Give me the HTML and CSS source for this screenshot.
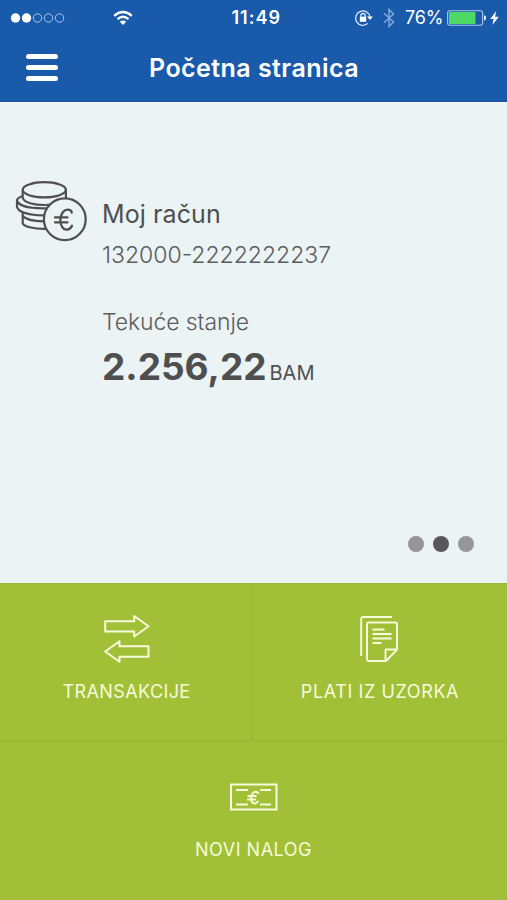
FILE: index.html
```html
<!DOCTYPE html>
<html lang="bs">
<head>
<meta charset="utf-8">
<title>Početna stranica</title>
<link rel="stylesheet" href="styles.css">
</head>
<body>
<div class="app">
  <header class="header">
    <div class="status">
      <div class="status-left">
        <svg class="signal" width="56" height="12" viewBox="0 0 56 12">
          <g fill="#fff"><circle cx="5.500" cy="6" r="4.700"/><circle cx="16.500" cy="6" r="4.700"/></g>
          <g fill="none" stroke="#a9c9ee" stroke-width="1"><circle cx="27.500" cy="6" r="4.200"/><circle cx="38.500" cy="6" r="4.200"/><circle cx="49.500" cy="6" r="4.200"/></g>
        </svg>
        <svg class="wifi" width="20" height="16" viewBox="0 0 20 16" fill="none" stroke="#fff" stroke-width="2.400">
          <path d="M1.200 5.800Q10-1.800 18.800 5.800M4.500 9.200Q10 4.400 15.500 9.200"/>
          <path d="M10 15 6.800 11.800Q10 9.200 13.200 11.800Z" fill="#fff" stroke="none"/>
        </svg>
      </div>
      <span class="time">11:49</span>
      <div class="status-right">
        <svg class="lock" width="20" height="18" viewBox="0 0 20 18" fill="none" stroke="#dceafa" stroke-width="1.300">
          <path d="M13.800 14.400A7.200 7.200 0 1 1 16 8.300"/>
          <path d="M13 7.500h6L16 11Z" fill="#fff" stroke="none"/>
          <path d="M6.900 8V6.600a2.100 2.100 0 0 1 4.200 0V8"/>
          <path d="M5.800 7.700h6.400v5.100H5.800Z" fill="#fff" stroke="none"/>
        </svg>
        <svg class="bluetooth" width="12" height="20" viewBox="0 0 12 20" fill="none" stroke="#7fa9dc" stroke-width="1.500">
          <path d="M1 5.200 10.500 14 6 18.500v-17L10.500 6 1 14.800"/>
        </svg>
        <span class="percent">76%</span>
        <svg class="battery" width="40" height="16" viewBox="0 0 40 16">
          <rect x=".6" y=".7" width="35" height="14.600" rx="2.200" fill="none" stroke="#a9c9ee" stroke-width="1.100"/>
          <rect x="2" y="2" width="26.500" height="12" rx="1" fill="#4cd964"/>
          <path d="M37 5.300q2.200.3 2.200 2.700T37 10.700Z" fill="#dceafa"/>
        </svg>
        <svg class="bolt" width="9" height="14" viewBox="0 0 9 14"><path d="M6.200 0 .2 8h3.400L2.400 14l6.400-8.200H5.100Z" fill="#fff"/></svg>
      </div>
    </div>
    <div class="nav">
      <div class="menu"><i></i><i></i><i></i></div>
      <h1 class="title">Početna stranica</h1>
    </div>
  </header>

  <main class="account">
    <svg class="coins" width="74" height="64" viewBox="0 0 74 64" fill="none" stroke="#4f4f4f" stroke-width="2.200">
      <ellipse cx="30.300" cy="9.800" rx="21.600" ry="7.600"/>
      <path d="M8.700 9.800V18c1.500 4.500 11 7 22 7q5 0 9-1M51.900 9.800V18.500"/>
      <path d="M8.700 16C5 17.300 3 18.700 3 20.500c1 4.500 10 7.700 26 7.900h4M3 20.500V27c1.500 5 12 8.200 27 8.400"/>
      <path d="M8.700 32v4c3 3.500 11 5.200 21 5.400M8.700 36v7.500c2 3.500 12 5.500 23 5.300"/>
      <circle cx="50.800" cy="39.200" r="20.900" fill="#ebf3f4"/>
      <path d="M57.800 32.500c-.8-3.600-6.300-3.800-9-.3-3.300 4.500-3.300 11.500-.3 15.300 2.700 3.500 7.700 2.600 9.500-1.700M41 37.400h12.500M41 42.400h12.500" stroke-width="2.300" stroke-linecap="round"/>
    </svg>
    <div class="details">
      <div class="name">Moj račun</div>
      <div class="number">132000-2222222237</div>
      <div class="label">Tekuće stanje</div>
      <div class="balance"><span class="amount">2.256,22</span><span class="currency">BAM</span></div>
    </div>
    <div class="pager"><i></i><i class="active"></i><i></i></div>
  </main>

  <section class="actions">
    <div class="tile transactions">
      <svg width="46" height="50" viewBox="0 0 46 50" fill="none" stroke="#f6fbdc" stroke-width="2" stroke-linejoin="round">
        <path d="M1.200 6.200h29V1L44.500 11.200 30.200 21.500v-5H1.200Z"/>
        <path d="M44.500 31.200H15.500V26.200L1.200 36.500 15.500 46.800v-5h29Z"/>
      </svg>
      <span class="caption">TRANSAKCIJE</span>
    </div>
    <div class="tile templates">
      <svg width="40" height="50" viewBox="0 0 40 50" fill="none" stroke="#f6fbdc" stroke-width="1.900" stroke-linejoin="round">
        <path d="M1.200 41V4q0-2 2-2H32"/>
        <path d="M8.500 7.500h27q1.500 0 1.500 1.500v25.500L26 46H8.500q-1.500 0-1.500-1.500V9Q7 7.500 8.500 7.500Z"/>
        <path d="M25.500 46V34.500h11.500M12.500 14.500h12M12.500 19h19M12.500 23.500h19M12.500 28h9"/>
      </svg>
      <span class="caption">PLATI IZ UZORKA</span>
    </div>
    <div class="tile order">
      <svg width="48" height="28" viewBox="0 0 48 28" fill="none" stroke="#f6fbdc" stroke-width="2">
        <path d="M1 1.500h45.500v25H1Z"/>
        <path d="M6 7h12M30 7h11M6 21.500h12M30 21.500h11"/>
        <path d="M28.500 11c-1-3.200-4.800-3-6.300.2-1.500 3.300-1.200 6.800.3 8.300 1.800 1.800 4.800.8 5.600-1.800M17.500 13h9M17 16.500h9"/>
      </svg>
      <span class="caption">NOVI NALOG</span>
    </div>
  </section>
</div>
</body>
</html>
```
FILE: styles.css
```css
* { box-sizing: border-box; }
body { margin: 0; font-family: Inter, "Liberation Sans", sans-serif; }
svg { display: block; flex: none; }
.app { display: flex; flex-direction: column; width: 507px; height: 900px; overflow: hidden; }

.header { height: 102px; background: #1a5aab; color: #fff; border-bottom: 1px solid #1750a0; }
.status { display: grid; grid-template-columns: 1fr 50px 1fr; align-items: center; height: 34px; }
.status-left, .status-right { display: flex; align-items: center; }
.status-left { padding-left: 10px; }
.wifi { margin-left: 47px; }
.time { padding: 1px 0 0 3px; font-size: 18px; font-weight: 600; letter-spacing: 1px; line-height: 34px; white-space: nowrap; }
.status-right { justify-content: flex-end; padding-right: 8px; }
.lock { margin-right: 1px; }
.bluetooth { margin: 0 10px 0 8px; }
.percent { width: 37px; padding-top: 1px; font-size: 18px; letter-spacing: -.2px; line-height: 34px; white-space: nowrap; }
.battery { margin: 0 3px 0 5px; }
.nav { display: flex; align-items: center; height: 67px; padding-left: 26px; }
.menu { display: flex; flex-direction: column; gap: 6px; width: 32px; }
.menu i { height: 5px; border-radius: 3px; background: #fff; }
.title { margin: 0 0 0 91px; font-size: 25px; line-height: 34px; font-weight: 600; letter-spacing: .45px; white-space: nowrap; }

.account { display: grid; grid-template-columns: 88px 1fr; grid-template-rows: 431px 49px; height: 481px; background: #ebf3f4; border-top: 1px solid #f6fbfc; }
.coins { margin: 77px 0 0 14px; }
.details { padding: 91px 0 0 14px; color: #4f4f4f; white-space: nowrap; }
.name { font-size: 25px; line-height: 40px; letter-spacing: .1px; }
.number { margin-top: 1px; font-size: 23px; line-height: 40px; font-weight: 300; color: #5c5c5c; }
.label { margin-top: 27px; font-size: 23px; line-height: 40px; font-weight: 300; letter-spacing: -.1px; color: #5c5c5c; }
.balance { display: flex; align-items: baseline; line-height: 50px; }
.amount { font-size: 37px; font-weight: 700; }
.currency { margin-left: 3px; font-size: 20px; }
.pager { grid-column: 1 / 3; display: flex; justify-content: flex-end; gap: 9px; padding-right: 33px; padding-top: 2px; }
.pager i { width: 16px; height: 16px; border-radius: 50%; background: #949697; }
.pager .active { background: #585858; }

.actions { display: grid; grid-template-columns: 253px 254px; grid-template-rows: 158px 159px; background: #a1c037; color: #f6fbdc; }
.tile { display: flex; flex-direction: column; align-items: center; }
.transactions { padding-left: 1px; border-right: 1px solid #97b634; }
.transactions, .templates { padding-top: 31px; border-bottom: 1px solid #97b634; border-top: 1px solid #97b634; }
.order { grid-column: 1 / 3; padding-top: 42px; }
.caption { margin-top: 15px; font-size: 18px; line-height: 24px; font-weight: 400; letter-spacing: .6px; white-space: nowrap; }
.transactions .caption { letter-spacing: .4px; }
.order .caption { margin-top: 27px; letter-spacing: .5px; }
```
